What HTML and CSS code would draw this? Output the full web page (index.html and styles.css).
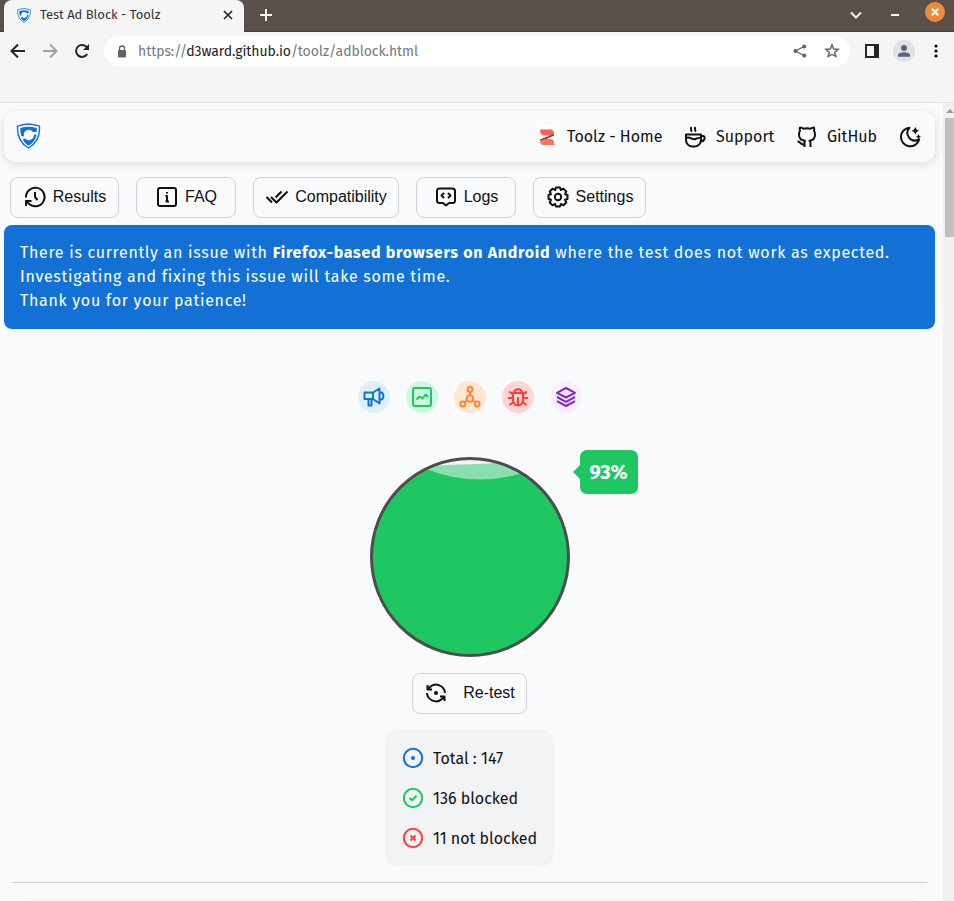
FILE: index.html
```html
<!DOCTYPE html>
<html lang="en">
<head>
<meta charset="utf-8">
<title>Test Ad Block - Toolz</title>
<link rel="stylesheet" href="styles.css">
</head>
<body>
<svg class="defs" width="0" height="0" aria-hidden="true">
  <symbol id="shield" viewBox="0 0 24 26">
    <path d="M12 1C9 1.1 4.8 1.8 1 3.2C.5 12.5 4 20.5 12 25C20 20.5 23.5 12.5 23 3.2C19.200 1.800 15 1.100 12 1Z" fill="#fff" stroke="#1371d6" stroke-width="1.400"/>
    <path d="M3.800 5C9 3.300 15 3.300 20.200 5V9H16.300A5 5 0 0 0 7.300 11L7.500 13.300H5C4 10.500 3.700 8 3.800 5ZM17.300 11.500H20C19.300 16.500 16.500 20.300 12 22.800C9.500 21.300 7.700 19.300 6.300 16.800L8.500 15.300A5 5 0 0 0 17.300 11.500Z" fill="#1371d6"/>
  </symbol>
</svg>

<header class="browser">
  <div class="tabstrip">
    <div class="tab">
      <svg class="favicon"><use href="#shield"/></svg>
      <span class="tab-title">Test Ad Block - Toolz</span>
      <svg class="tab-close" viewBox="0 0 10 10"><path d="M1 1L9 9M9 1L1 9"/></svg>
    </div>
    <svg class="new-tab" viewBox="0 0 12 12"><path d="M6 0V12M0 6H12"/></svg>
    <div class="window-controls">
      <svg class="chevron" viewBox="0 0 12 8"><path d="M1 1.500L6 6.500L11 1.500"/></svg>
      <span class="minimize"></span>
      <span class="close"><svg viewBox="0 0 8 8"><path d="M.8 .8L7.200 7.200M7.200 .8L.8 7.200"/></svg></span>
    </div>
  </div>
  <div class="toolbar">
    <svg class="tool" viewBox="0 0 16 16"><path d="M15 8H2M8 1.500L1.500 8L8 14.500"/></svg>
    <svg class="tool faded" viewBox="0 0 16 16"><path d="M1 8H14M8 1.500L14.500 8L8 14.500"/></svg>
    <svg class="tool" viewBox="0 0 16 16"><path d="M13.200 11A6 6 0 1 1 12.800 4.200"/><path class="solid" d="M15 1V7H9Z"/></svg>
    <div class="address">
      <svg class="lock" viewBox="0 0 10 13"><path d="M2.500 6V3.500A2.500 2.500 0 0 1 7.500 3.500V6" fill="none" stroke="#5f6368" stroke-width="1.300"/><rect x="1" y="5" width="8" height="7.500" rx="1" fill="#5f6368"/></svg>
      <span class="url">https://<b>d3ward.github.io</b>/toolz/adblock.html</span>
      <svg class="share" viewBox="0 0 14 14"><path d="M11 2.500L2.500 7L11 11.500" fill="none" stroke="#5f6368" stroke-width="1.300"/><g fill="#5f6368"><circle cx="11.200" cy="2.400" r="2"/><circle cx="2.500" cy="7" r="2"/><circle cx="11.200" cy="11.600" r="2"/></g></svg>
      <svg class="star" viewBox="0 0 16 16"><path d="M8 1.800L9.700 6L14.200 6.300L10.700 9.200L11.900 13.600L8 11.200L4.100 13.600L5.300 9.200L1.800 6.300L6.300 6Z" fill="none" stroke="#5f6368" stroke-width="1.400"/></svg>
    </div>
    <svg class="panel" viewBox="0 0 14 14"><path d="M0 0H14V14H0ZM2 2V12H9V2Z" fill="#252525" fill-rule="evenodd"/></svg>
    <svg class="avatar" viewBox="0 0 22 22"><circle cx="11" cy="11" r="11" fill="#dee1e6"/><circle cx="11" cy="8" r="3" fill="#5b6478"/><path d="M5 16.800V15.500C5 11.200 17 11.200 17 15.500V16.800Z" fill="#5b6478"/></svg>
    <svg class="kebab" viewBox="0 0 4 14"><circle cx="2" cy="2" r="1.600"/><circle cx="2" cy="7" r="1.600"/><circle cx="2" cy="12" r="1.600"/></svg>
  </div>
</header>

<div class="viewport">
<main class="page">
  <nav class="navbar">
    <svg class="brand"><use href="#shield"/></svg>
    <a class="nav-home"><svg class="zlogo" viewBox="0 0 24 24"><circle cx="12" cy="12" r="12" fill="#fff"/><path d="M5 4.500H16Q19 5 19 9L16 10.500H9Q5 10 5 4.500Z" fill="#fb5e5b"/><path d="M19 9L5 14.500V15.500H8L19 10.500Z" fill="#a81f31"/><path d="M5 15.500L10 14H16Q19.500 14.500 19.500 20H8Q5 19.500 5 15.500Z" fill="#ff7453"/></svg><span>Toolz - Home</span></a>
    <a class="nav-support"><svg class="icon" viewBox="0 0 24 24"><path d="M3 9.500H18V15A6.500 6.500 0 0 1 11.500 21.500H9.500A6.500 6.500 0 0 1 3 15ZM18 11H20C22.500 11 22.300 16.500 17.500 16.500M3 13C7 10.800 9 15.500 12.500 14S16 12.500 18 13M8.500 2C6.500 4 9.500 5 8 6.700M12.500 2C10.500 4 13.500 5 12 6.700"/></svg><span>Support</span></a>
    <a class="nav-github"><svg class="icon" viewBox="0 0 24 24"><path d="M9.500 22V17.500C9.500 16.700 9.700 16 10 15.700C6 15.300 4 13.500 4 9.500C4 8 4.300 6.800 5 5.800C4.600 4.800 4.600 3.500 5 2.500C6.500 2.500 7.700 3 8.700 3.800C10.800 3.200 13.200 3.200 15.300 3.800C16.300 3 17.500 2.500 19 2.500C19.400 3.500 19.400 4.800 19 5.800C19.700 6.800 20 8 20 9.500C20 13.500 18 15.300 14.500 15.700C15.200 16.200 15.500 17 15.500 18V22M9.500 19.500C6 20 5.500 16.700 2.500 16.200"/></svg><span>GitHub</span></a>
    <svg class="icon moon" viewBox="0 0 24 24"><path d="M11.500 2.700A9.300 9.300 0 1 0 21.200 14.500C12.500 18.500 6 9.500 11.500 2.700Z"/><path class="solid" d="M17.300 2L18.600 4.400L21 5.700L18.600 7L17.300 9.400L16 7L13.600 5.700L16 4.400ZM20.500 9.300L21.500 11L23 11.800L21.500 12.600L20.500 14.300L19.500 12.600L18 11.800L19.500 11Z"/></svg>
  </nav>

  <div class="actions">
    <button class="btn results"><svg class="icon" viewBox="0 0 24 24"><path d="M3 12.500A9.300 9.300 0 1 1 6.500 19.300L3.200 16.500M3 21V16H8.500M12 7V12L14.500 15"/></svg><span>Results</span></button>
    <button class="btn faq"><svg class="icon" viewBox="0 0 24 24"><rect x="3" y="3" width="18" height="18" rx="2"/><path d="M10.500 11H12V16.500M10.500 16.500H14M12 7V8.500"/></svg><span>FAQ</span></button>
    <button class="btn compat"><svg class="icon" viewBox="0 0 24 24"><path d="M1.500 12L7 17.500M6 12L11.500 17.500L22.500 6.500M10.500 12.500L16.500 6.500"/></svg><span>Compatibility</span></button>
    <button class="btn logs"><svg class="icon" viewBox="0 0 24 24"><path d="M5.500 3.500H18.500Q21 3.500 21 6V15.500Q21 18 18.500 18H15L12 20.500L9 18H5.500Q3 18 3 15.500V6Q3 3.500 5.500 3.500ZM10 8L7.500 10.500L10 13M14 8L16.500 10.500L14 13"/></svg><span>Logs</span></button>
    <button class="btn settings"><svg class="icon" viewBox="0 0 24 24"><path d="M10 2.500H14L14.800 5L17.500 3.700L20.300 6.500L19 9.200L21.500 10V14L19 14.800L20.300 17.500L17.500 20.300L14.800 19L14 21.500H10L9.200 19L6.500 20.300L3.700 17.500L5 14.800L2.500 14V10L5 9.200L3.700 6.500L6.500 3.700L9.200 5Z"/><circle cx="12" cy="12" r="3.200"/></svg><span>Settings</span></button>
  </div>

  <section class="notice">
    <p>There is currently an issue with <strong>Firefox-based browsers on Android</strong> where the test does not work as expected.</p>
    <p>Investigating and fixing this issue will take some time.</p>
    <p>Thank you for your patience!</p>
  </section>

  <div class="categories">
    <span class="cat ads"><svg class="icon" viewBox="0 0 24 24"><path d="M2.500 7.500H11V14H2.500ZM11 7.500L17.500 3.500V18.500L11 14M6.500 14V20.500H9.500V14M17.500 7.200C22.700 7.200 22.700 15 17.500 15"/></svg></span>
    <span class="cat analytics"><svg class="icon" viewBox="0 0 24 24"><rect x="3" y="3" width="18" height="18" rx="2"/><path d="M6.500 14.500L9.500 11.500L12.500 13.500L15.500 9.500L18 12"/></svg></span>
    <span class="cat trackers"><svg class="icon" viewBox="0 0 24 24"><circle cx="12" cy="4.500" r="2.400"/><circle cx="12" cy="13.500" r="3.300"/><circle cx="4.800" cy="19" r="2.400"/><circle cx="19.200" cy="19" r="2.400"/><path d="M12 7V10.200M9.200 15.500L6.500 17.300M14.800 15.500L17.500 17.300"/></svg></span>
    <span class="cat errors"><svg class="icon" viewBox="0 0 24 24"><path d="M8 8C8 3 16 3 16 8M7 8H17V15A5 5.500 0 0 1 7 15ZM12 12V20M2 13H7M17 13H22M7 9.500L3 6.500M17 9.500L21 6.500M7.500 17L3.500 20M16.500 17L20.500 20"/></svg></span>
    <span class="cat mix"><svg class="icon" viewBox="0 0 24 24"><path d="M12 3L21 7.800L12 12.500L3 7.800ZM3 12L12 16.800L21 12M3 16.200L12 21L21 16.200"/></svg></span>
  </div>

  <div class="gauge">
    <svg class="ball" viewBox="0 0 200 200">
      <defs><clipPath id="ballclip"><circle cx="100" cy="100" r="98"/></clipPath></defs>
      <g clip-path="url(#ballclip)">
        <rect width="200" height="200" fill="#f1f3f6"/>
        <path d="M0 9Q90 9 140 5L200 20V200H0Z" fill="#8adfae"/>
        <path d="M0 0L56 12Q105 31 152 16L200 0V200H0Z" fill="#1fc763"/>
      </g>
      <circle cx="100" cy="100" r="98.500" fill="none" stroke="#4d4d4d" stroke-width="3"/>
    </svg>
    <span class="score">93%</span>
  </div>

  <button class="btn retest"><svg class="icon" viewBox="0 0 24 24"><path d="M3.500 8.500H8M3.500 4V8.500L6 6A9 9 0 0 1 21 12M20.500 15.500H16M20.500 20V15.500L18 18A9 9 0 0 1 3 12"/><circle class="solid" cx="12" cy="12" r="2"/></svg><span>Re-test</span></button>

  <div class="stats">
    <div class="stat total"><svg class="icon" viewBox="0 0 24 24"><circle cx="12" cy="12" r="9.200"/><circle class="solid" cx="12" cy="12" r="2"/></svg><span>Total : 147</span></div>
    <div class="stat blocked"><svg class="icon" viewBox="0 0 24 24"><circle cx="12" cy="12" r="9.200"/><path d="M8.500 12L11 14.300L15.500 9.800"/></svg><span>136 blocked</span></div>
    <div class="stat open"><svg class="icon" viewBox="0 0 24 24"><circle cx="12" cy="12" r="9.200"/><path d="M9.500 9.500L14.500 14.500M14.500 9.500L9.500 14.500"/></svg><span>11 not blocked</span></div>
  </div>

  <hr class="divider">
  <div class="next-card"></div>
</main>
<aside class="scrollbar"><span class="arrow"></span><span class="thumb"></span></aside>
</div>
</body>
</html>
```
FILE: styles.css
```css
* { box-sizing: border-box; }
body { margin: 0; height: 901px; overflow: hidden; display: flex; flex-direction: column; background: #f9fafc; color: #111; font: 16px/24px "Fira Sans", "Noto Sans", sans-serif; }
svg { display: block; flex: none; }
.defs { position: absolute; }
.icon { width: 24px; height: 24px; fill: none; stroke: currentColor; stroke-width: 2; stroke-linejoin: round; }
.solid { fill: currentColor; stroke: none; }

.browser { height: 103px; flex: none; background: #f5f5f5; border-bottom: 1px solid #dddfe2; }
.tabstrip { height: 32px; display: flex; background: #59504a; border-bottom: 1px solid #483f3b; }
.tab { width: 240px; height: 32px; margin-left: 4px; padding: 0 11px 2px 13px; display: flex; align-items: center; background: #f5f5f5; border-radius: 8px 8px 0 0; font-size: 13px; color: #333; }
.favicon { width: 14px; height: 15px; margin-right: 9px; }
.tab-title { flex: 1; white-space: nowrap; letter-spacing: -.03px; }
.tab-close { width: 10px; height: 10px; stroke: #222; stroke-width: 1.600; }
.new-tab { width: 12px; height: 12px; margin: 9px 0 0 16px; stroke: #fff; stroke-width: 2; }
.window-controls { margin-left: auto; display: flex; align-items: flex-start; padding-right: 9px; }
.chevron { width: 12px; height: 8px; margin-top: 11px; fill: none; stroke: #f0eeec; stroke-width: 2; }
.minimize { width: 8px; height: 2px; margin: 14px 26px 0 29px; background: #fff; }
.close { width: 20px; height: 20px; margin-top: 2px; border-radius: 50%; background: #f08a38; display: grid; place-items: center; }
.close svg { width: 8px; height: 8px; stroke: #fff; stroke-width: 2; }

.toolbar { display: flex; align-items: center; height: 38px; padding-left: 10px; color: #252525; }
.tool { width: 16px; height: 16px; margin-right: 16px; fill: none; stroke: currentColor; stroke-width: 2; }
.faded { color: #a2a2a2; }
.tool:nth-child(3) { margin-right: 14px; }
.address { width: 746px; height: 30px; border-radius: 15px; background: #fff; display: flex; align-items: center; padding: 0 10px 0 13px; }
.lock { width: 10px; height: 13px; margin-right: 11px; }
.url { flex: 1; padding-top: 2px; font-size: 14px; letter-spacing: -.06px; color: #747a80; white-space: nowrap; }
.url b { font-weight: 400; color: #222; }
.share { width: 14px; height: 14px; margin-right: 17px; }
.star { width: 16px; height: 16px; }
.panel { width: 14px; height: 14px; margin-left: 15px; }
.avatar { width: 22px; height: 22px; margin-left: 14px; }
.kebab { width: 4px; height: 14px; margin-left: 19px; }

.viewport { flex: 1; min-height: 0; display: flex; }
.page { width: 943px; padding: 8px 8px 0 4px; overflow: hidden; display: flex; flex-direction: column; align-items: center; }
.page > * { flex: none; }
.navbar { width: 931px; height: 51px; display: flex; align-items: center; padding: 0 13px 0 12px; border-radius: 12px; box-shadow: 0 2px 10px rgba(0,0,0,.13); }
.brand { width: 25px; height: 26px; margin-right: auto; margin-bottom: 1px; }
.navbar a { display: flex; align-items: center; white-space: nowrap; }
.zlogo { width: 24px; height: 24px; margin-right: 8px; }
.nav-home { width: 148px; }
.nav-support { width: 112px; }
.nav-support .icon { margin-right: 9px; }
.nav-github .icon { margin-right: 8px; }
.nav-github { width: 103px; }

.actions { align-self: flex-start; display: flex; gap: 17px; margin: 15px 0 0 6px; }
.btn { height: 41px; display: flex; align-items: center; justify-content: center; gap: 6px; padding: 0 0 1px; border: 1px solid #d0d2da; border-radius: 8px; background: #f9fafc; color: #111; font: 16px "Liberation Sans", Arial, sans-serif; }
.results { width: 109px; }
.faq, .logs { width: 100px; }
.compat { width: 146px; }
.settings { width: 113px; }

.notice { width: 931px; height: 104px; margin-top: 7px; padding: 16px; border-radius: 8px; background: #1371d6; color: #fff; white-space: nowrap; letter-spacing: .7px; }
.notice p { margin: 0; }

.categories { display: flex; gap: 16px; margin-top: 52px; }
.cat { width: 32px; height: 32px; border-radius: 50%; display: grid; place-items: center; }
.cat .icon { width: 24px; height: 24px; }
.ads { color: #1371d6; background: #dff0fd; }
.analytics { color: #1fc763; background: #cff6df; }
.trackers { color: #ff8730; background: #ffe6d0; }
.errors { color: #ff3b3b; background: #ffd5d4; }
.mix { color: #8524d2; background: #f5f0fc; }

.gauge { position: relative; margin-top: 44px; }
.ball { width: 200px; height: 200px; }
.score { position: absolute; left: 210px; top: -7px; width: 58px; height: 44px; border-radius: 7px; background: #1fc763; color: #fff; font-size: 20px; font-weight: 700; line-height: 45px; text-align: center; letter-spacing: -.1px; }
.score::before { content: ""; position: absolute; left: -7px; top: 15px; border: 7px solid transparent; border-left: 0; border-right-color: #1fc763; }
.retest { width: 115px; margin-top: 16px; gap: 15px; }

.stats { width: 169px; height: 136px; margin-top: 16px; padding: 8px 16px; border-radius: 12px; background: #f2f3f5; }
.stat { height: 40px; display: flex; align-items: center; gap: 8px; white-space: nowrap; }
.stat span { color: #111; padding-top: 2px; }
.total { color: #1371d6; }
.blocked { color: #1fc763; }
.open { color: #ff3b3b; }
.divider { width: 915px; height: 1px; margin: 16px 0 0; border: 0; background: #d0d2da; }
.next-card { width: 905px; height: 40px; margin-top: 16px; border-radius: 12px; background: #f2f3f5; }

.scrollbar { width: 11px; background: #f0f0f0; display: flex; flex-direction: column; align-items: flex-end; }
.arrow { margin: 6px 0 5px; border: 4px solid transparent; border-top: 0; border-bottom-color: #999; }
.thumb { width: 9px; height: 119px; background: #c1c1c1; }
```
